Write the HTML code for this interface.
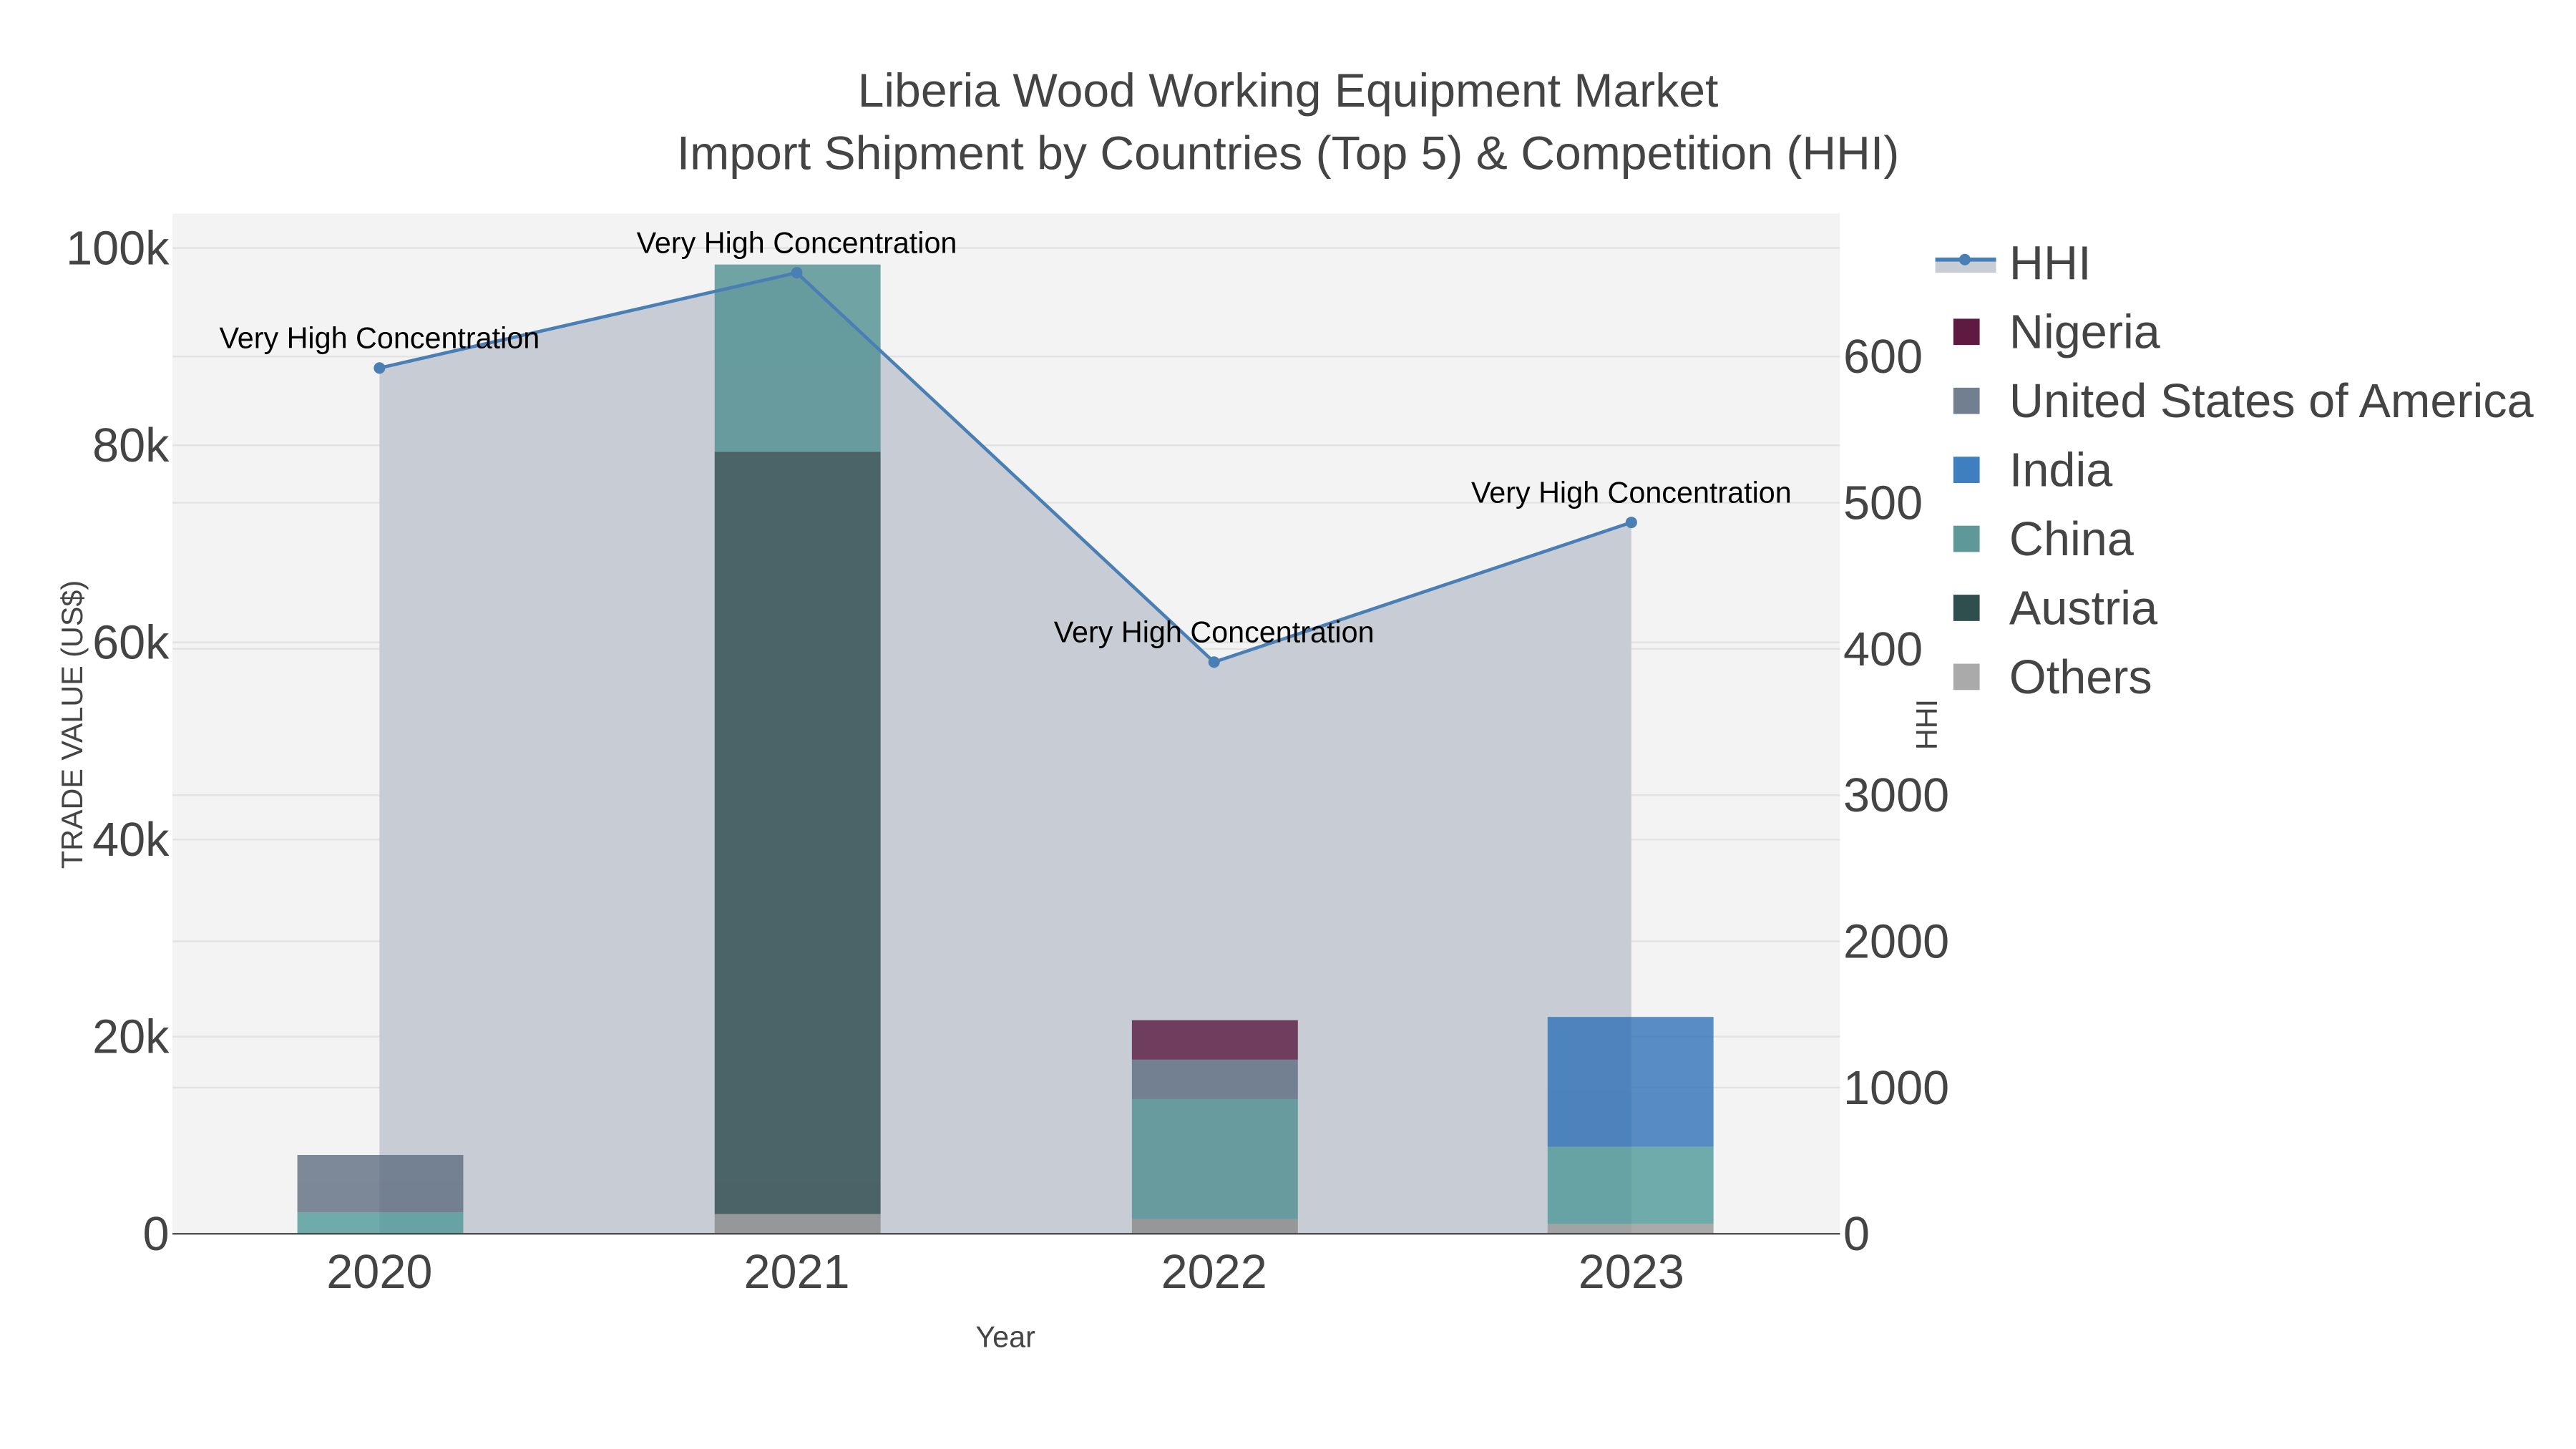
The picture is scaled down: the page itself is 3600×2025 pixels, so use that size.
<!DOCTYPE html>
<html><head><meta charset="utf-8"><style>html,body{margin:0;padding:0;background:#fff}svg{display:block}</style></head>
<body>
<svg width="3600" height="2025" viewBox="0 0 1568 882" preserveAspectRatio="xMinYMin meet" xmlns="http://www.w3.org/2000/svg" font-family="Liberation Sans, sans-serif">
<rect width="1568" height="882" fill="#fff"/>
<rect x="105" y="130" width="1015" height="621" fill="#f3f3f3"/>
<g stroke="#e2e2e2" stroke-width="1">
<line x1="105" x2="1120" y1="631" y2="631"/><line x1="105" x2="1120" y1="511" y2="511"/><line x1="105" x2="1120" y1="391" y2="391"/><line x1="105" x2="1120" y1="271" y2="271"/><line x1="105" x2="1120" y1="151" y2="151"/>
<line x1="105" x2="1120" y1="662" y2="662"/><line x1="105" x2="1120" y1="573" y2="573"/><line x1="105" x2="1120" y1="484" y2="484"/><line x1="105" x2="1120" y1="395" y2="395"/><line x1="105" x2="1120" y1="306" y2="306"/><line x1="105" x2="1120" y1="217" y2="217"/>
</g>
<polygon points="231,751 231,224 485,166 739,403 993,318 993,751" fill="#c8ccd4"/>
<g opacity="0.8">
<rect x="181" y="738" width="101" height="13" fill="#4f9a9a"/>
<rect x="181" y="703" width="101" height="35" fill="#5f6e82"/>
<rect x="435" y="739" width="101" height="12" fill="#8a8a8a"/>
<rect x="435" y="275" width="101" height="464" fill="#2c4a4c"/>
<rect x="435" y="161" width="101" height="114" fill="#4f9090"/>
<rect x="689" y="742" width="101" height="9" fill="#8a8a8a"/>
<rect x="689" y="669" width="101" height="73" fill="#4f9090"/>
<rect x="689" y="645" width="101" height="24" fill="#5f6e82"/>
<rect x="689" y="621" width="101" height="24" fill="#5a1a40"/>
<rect x="942" y="745" width="101" height="6" fill="#999"/>
<rect x="942" y="698" width="101" height="47" fill="#4f9a9a"/>
<rect x="942" y="619" width="101" height="79" fill="#2f72b8"/>
</g>
<line x1="105" x2="1120" y1="751" y2="751" stroke="#444" stroke-width="1"/>
<polyline points="231,224 485,166 739,403 993,318" fill="none" stroke="#4a7fb5" stroke-width="2"/>
<g fill="#4a7fb5"><circle cx="231" cy="224" r="3.5"/><circle cx="485" cy="166" r="3.5"/><circle cx="739" cy="403" r="3.5"/><circle cx="993" cy="318" r="3.5"/></g>
<g font-size="18" fill="#000" text-anchor="middle">
<text x="231" y="212">Very High Concentration</text><text x="485" y="154">Very High Concentration</text><text x="739" y="391">Very High Concentration</text><text x="993" y="306">Very High Concentration</text>
</g>
<g fill="#444" text-anchor="middle" font-size="28.8">
<text x="784" y="65">Liberia Wood Working Equipment Market</text>
<text x="784" y="103">Import Shipment by Countries (Top 5) &amp; Competition (HHI)</text>
</g>
<g fill="#444" font-size="29" text-anchor="end">
<text x="103" y="761">0</text><text x="103" y="641">20k</text><text x="103" y="521">40k</text><text x="103" y="401">60k</text><text x="103" y="281">80k</text><text x="103" y="161">100k</text>
</g>
<g fill="#444" font-size="29">
<text x="1122" y="761">0</text><text x="1122" y="672">1000</text><text x="1122" y="583">2000</text><text x="1122" y="494">3000</text><text x="1122" y="405">400</text><text x="1122" y="316">500</text><text x="1122" y="227">600</text>
</g>
<g fill="#444" font-size="29" text-anchor="middle">
<text x="231" y="784">2020</text><text x="485" y="784">2021</text><text x="739" y="784">2022</text><text x="993" y="784">2023</text>
</g>
<text x="612" y="820" font-size="18" fill="#444" text-anchor="middle">Year</text>
<text transform="translate(50,441) rotate(-90)" font-size="18" fill="#444" text-anchor="middle">TRADE VALUE (US$)</text>
<text transform="translate(1179,441) rotate(-90)" font-size="18" fill="#444" text-anchor="middle">HHI</text>
<rect x="1178" y="158" width="37" height="8" fill="#c8ccd4"/>
<line x1="1178" x2="1215" y1="158" y2="158" stroke="#4a7fb5" stroke-width="2.5"/><circle cx="1196" cy="158" r="3.5" fill="#4a7fb5"/>
<g>
<rect x="1189" y="194" width="16" height="16" fill="#5e1a40"/>
<rect x="1189" y="236" width="16" height="16" fill="#717f90"/>
<rect x="1189" y="278" width="16" height="16" fill="#3f7fbf"/>
<rect x="1189" y="320" width="16" height="16" fill="#5f9898"/>
<rect x="1189" y="362" width="16" height="16" fill="#2f4f4f"/>
<rect x="1189" y="404" width="16" height="16" fill="#aaa"/>
</g>
<g fill="#444" font-size="29">
<text x="1223" y="170">HHI</text><text x="1223" y="212">Nigeria</text><text x="1223" y="254">United States of America</text><text x="1223" y="296">India</text><text x="1223" y="338">China</text><text x="1223" y="380">Austria</text><text x="1223" y="422">Others</text>
</g>
</svg>
</body></html>
